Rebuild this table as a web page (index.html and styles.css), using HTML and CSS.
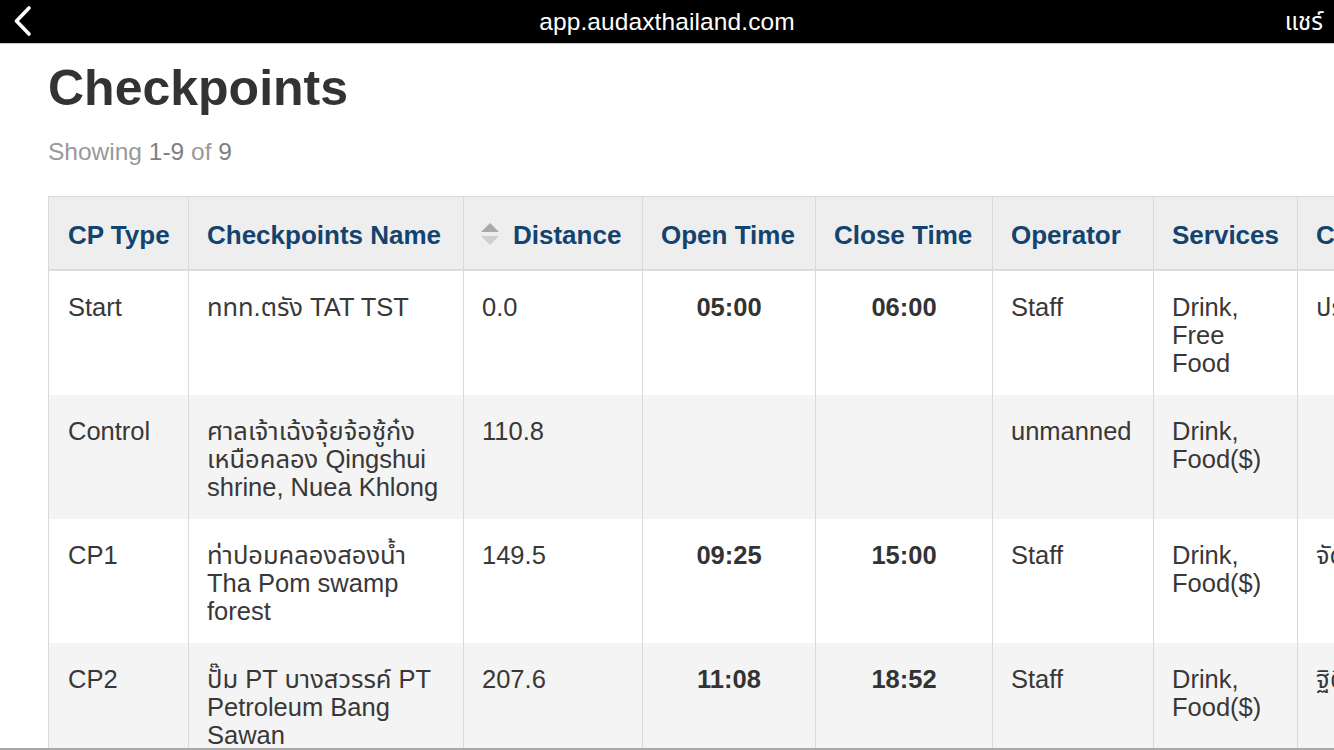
FILE: index.html
```html
<!DOCTYPE html>
<html lang="th">
<head>
<meta charset="utf-8">
<title>Checkpoints</title>
<link rel="stylesheet" href="styles.css">
</head>
<body>
<header class="topbar">
  <div class="topbar-left">
    <svg class="back" width="44" height="44" viewBox="0 0 44 44" aria-hidden="true">
      <path d="M29 9 L16.5 22 L29 35" fill="none" stroke="#fff" stroke-width="3.6" stroke-linecap="round" stroke-linejoin="round"/>
    </svg>
  </div>
  <div class="topbar-url">app.audaxthailand.com</div>
  <div class="topbar-right">แชร์</div>
</header>

<main class="page">
  <h1 class="title">Checkpoints</h1>
  <p class="summary">Showing <span class="num">1-9</span> of <span class="num">9</span></p>

  <table class="cp-table">
    <colgroup>
      <col class="c-type">
      <col class="c-name">
      <col class="c-dist">
      <col class="c-open">
      <col class="c-close">
      <col class="c-op">
      <col class="c-svc">
      <col class="c-more">
    </colgroup>
    <thead>
      <tr>
        <th>CP Type</th>
        <th>Checkpoints Name</th>
        <th class="sortable"><span class="sort"><span class="up"></span><span class="down"></span></span>Distance</th>
        <th>Open Time</th>
        <th>Close Time</th>
        <th>Operator</th>
        <th>Services</th>
        <th>Contact</th>
      </tr>
    </thead>
    <tbody>
      <tr>
        <td>Start</td>
        <td>ททท.ตรัง TAT TST</td>
        <td>0.0</td>
        <td class="time">05:00</td>
        <td class="time">06:00</td>
        <td>Staff</td>
        <td>Drink,<br>Free<br>Food</td>
        <td>ประสานงาน</td>
      </tr>
      <tr>
        <td>Control</td>
        <td>ศาลเจ้าเฉ้งจุ้ยจ้อซู้ก๋ง เหนือคลอง Qingshui shrine, Nuea Khlong</td>
        <td>110.8</td>
        <td class="time"></td>
        <td class="time"></td>
        <td>unmanned</td>
        <td>Drink,<br>Food($)</td>
        <td></td>
      </tr>
      <tr>
        <td>CP1</td>
        <td>ท่าปอมคลองสองน้ำ Tha Pom swamp forest</td>
        <td>149.5</td>
        <td class="time">09:25</td>
        <td class="time">15:00</td>
        <td>Staff</td>
        <td>Drink,<br>Food($)</td>
        <td>จัดโดย</td>
      </tr>
      <tr>
        <td>CP2</td>
        <td>ปั๊ม PT บางสวรรค์ PT Petroleum Bang Sawan</td>
        <td>207.6</td>
        <td class="time">11:08</td>
        <td class="time">18:52</td>
        <td>Staff</td>
        <td>Drink,<br>Food($)</td>
        <td>ฐิติ</td>
      </tr>
    </tbody>
  </table>
</main>
<div class="bottom-edge"></div>
</body>
</html>
```

FILE: styles.css
```css
html, body {
  margin: 0;
  padding: 0;
  background: #fff;
  overflow: hidden;
  height: 100%;
}

body {
  font-family: "Liberation Sans", Arial, "Noto Sans Thai", "DejaVu Sans", sans-serif;
  color: #333;
}

.topbar {
  display: grid;
  grid-template-columns: 1fr auto 1fr;
  align-items: center;
  height: 43px;
  background: #000;
  border-bottom: 1px solid #c8c8c8;
  color: #fff;
}

.topbar-left {
  display: flex;
  align-items: center;
  height: 43px;
}

.back {
  display: block;
  margin-top: -1px;
}

.topbar-url {
  font-size: 24.5px;
  line-height: 43px;
  letter-spacing: 0.1px;
}

.topbar-right {
  justify-self: end;
  padding-right: 11px;
  font-size: 24px;
  line-height: 43px;
}

.page {
  padding-left: 48px;
  width: 1460px;
}

.title {
  margin: 16px 0 0;
  font-size: 50px;
  line-height: 56px;
  font-weight: bold;
  color: #333;
}

.summary {
  margin: 21px 0 0;
  font-size: 24.5px;
  line-height: 30px;
  color: #999;
}

.summary .num {
  color: #7f7f7f;
}

.cp-table {
  margin-top: 29px;
  border-collapse: collapse;
  table-layout: fixed;
  width: 1449px;
  border: 1px solid #d9d9d9;
  font-size: 25.5px;
}

.c-type { width: 140px; }
.c-name { width: 275px; }
.c-dist { width: 179px; }
.c-open { width: 173px; }
.c-close { width: 177px; }
.c-op { width: 161px; }
.c-svc { width: 144px; }
.c-more { width: 200px; }

.cp-table th {
  background: #eee;
  color: #13436f;
  font-weight: bold;
  text-align: left;
  font-size: 26px;
  line-height: 28px;
  padding: 24px 18px 20px;
  border-left: 1px solid #d9d9d9;
  border-bottom: 2px solid #dcdcdc;
  white-space: nowrap;
  overflow: hidden;
}

.cp-table th:first-child {
  padding-left: 19px;
}

.cp-table th.sortable {
  padding-left: 17px;
}

.sort {
  display: inline-flex;
  flex-direction: column;
  gap: 4px;
  vertical-align: middle;
  margin-right: 14px;
  margin-top: -6px;
}

.sort .up {
  width: 0;
  height: 0;
  border-left: 9px solid transparent;
  border-right: 9px solid transparent;
  border-bottom: 9px solid #a9a9a9;
}

.sort .down {
  width: 0;
  height: 0;
  border-left: 9px solid transparent;
  border-right: 9px solid transparent;
  border-top: 9px solid #cfcfcf;
}

.cp-table td {
  vertical-align: top;
  line-height: 28px;
  padding: 22px 18px 18px;
  border-left: 1px solid #d9d9d9;
  color: #383838;
  white-space: normal;
  overflow: hidden;
}

.cp-table td:first-child {
  padding-left: 19px;
}

.cp-table td:last-child {
  white-space: nowrap;
}

.cp-table tbody tr:nth-child(even) td {
  background: #f4f4f4;
}

.cp-table tbody tr {
  height: 124px;
}

.cp-table td.time {
  text-align: center;
  font-weight: bold;
  color: #333;
}

.bottom-edge {
  position: fixed;
  left: 0;
  right: 0;
  bottom: 0;
  height: 2px;
  background: #a8a8a8;
}
```
